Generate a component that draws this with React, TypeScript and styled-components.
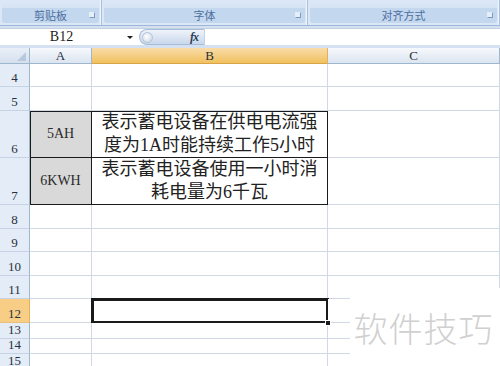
import React from 'react';
import styled, { createGlobalStyle } from 'styled-components';

const GlobalStyle = createGlobalStyle`
  html, body {
    margin: 0;
    padding: 0;
    background: #ffffff;
  }
  body {
    width: 500px;
    height: 366px;
    overflow: hidden;
  }
  * { box-sizing: border-box; }
`;

const GRID = '#d0d7e5';
const HEAD_LINE = '#9eb6ce';

const columns = [
    { key: 'A', width: 62 },
    { key: 'B', width: 236, active: true },
    { key: 'C', width: 0 },
];

const rows = [
    { n: 4, h: 23 },
    { n: 5, h: 24 },
    { n: 6, h: 47, cells: ['5AH', ['表示蓄电设备在供电电流强', '度为1A时能持续工作5小时']], top: true },
    { n: 7, h: 47, cells: ['6KWH', ['表示蓄电设备使用一小时消', '耗电量为6千瓦']] },
    { n: 8, h: 24 },
    { n: 9, h: 23 },
    { n: 10, h: 24 },
    { n: 11, h: 23 },
    { n: 12, h: 24, selected: true },
    { n: 13, h: 16 },
    { n: 14, h: 15 },
    { n: 15, h: 16 },
];

const App = () => {
    return (
        <Page>
            <GlobalStyle />
            <Ribbon>
                <Group $w={102}>
                    <GroupBody />
                    <GroupLabel>
                        剪贴板
                        <Launcher />
                    </GroupLabel>
                </Group>
                <Group $w={206}>
                    <GroupBody />
                    <GroupLabel>
                        字体
                        <Launcher />
                    </GroupLabel>
                </Group>
                <Group $w={0}>
                    <GroupBody />
                    <GroupLabel>
                        对齐方式
                        <Launcher />
                    </GroupLabel>
                </Group>
            </Ribbon>

            <FormulaBar>
                <NameBox>
                    <span>B12</span>
                    <DropArrow />
                </NameBox>
                <FxPill>
                    <Knob />
                    <Fx>fx</Fx>
                </FxPill>
                <FormulaInput />
            </FormulaBar>

            <Sheet>
                <HeaderRow>
                    <Corner>
                        <svg width="9" height="9" viewBox="0 0 9 9">
                            <polygon points="9,0 9,9 0,9" fill="#b7c9df" />
                        </svg>
                    </Corner>
                    {columns.map((c) => (
                        <ColHeader key={c.key} $w={c.width} $active={c.active}>
                            {c.key}
                        </ColHeader>
                    ))}
                </HeaderRow>

                {rows.map((r) => (
                    <Row key={r.n} $h={r.h}>
                        <RowHeader $active={r.selected}>{r.n}</RowHeader>
                        <Cell
                            $w={62}
                            $boxed={!!r.cells}
                            $fill={r.cells ? '#d9d9d9' : undefined}
                            $edgeTop={r.top}
                            $edgeLeft={!!r.cells}
                        >
                            {r.cells && <Label>{r.cells[0]}</Label>}
                        </Cell>
                        <Cell $w={236} $boxed={!!r.cells} $edgeTop={r.top} $selected={r.selected}>
                            {r.cells && (
                                <Text>
                                    {(r.cells[1] as string[]).map((line, i) => (
                                        <div key={i}>{line}</div>
                                    ))}
                                </Text>
                            )}
                            {r.selected && <FillHandle />}
                        </Cell>
                        <Cell $w={0} />
                    </Row>
                ))}
            </Sheet>

            <Watermark>软件技巧</Watermark>
        </Page>
    );
};

const Page = styled.div`
	position: relative;
	width: 500px;
	height: 366px;
	overflow: hidden;
	background: #d5e1f0;
	font-family: 'Noto Sans CJK SC', sans-serif;
`;

const Ribbon = styled.div`
	display: flex;
	height: 26px;
	background: #dbe7f5;
	border-bottom: 1px solid #9cb7da;
`;

const Group = styled.div<{ $w: number }>`
	display: flex;
	flex-direction: column;
	width: ${(p) => (p.$w ? `${p.$w}px` : 'auto')};
	flex: ${(p) => (p.$w ? '0 0 auto' : '1')};
	padding: 0 2px 2px;
	border-right: 1px solid #a9c1e0;
	box-shadow: inset -1px 0 0 #eef4fb;
`;

const GroupBody = styled.div`
	height: 8px;
	background: linear-gradient(#dce8f6, #d6e3f3);
`;

const GroupLabel = styled.div`
	position: relative;
	flex: 1;
	display: flex;
	align-items: center;
	justify-content: center;
	background: #c3d7ef;
	border-radius: 0 0 3px 3px;
	color: #4d6f9e;
	font-size: 11px;
	line-height: 1;
`;

const Launcher = styled.span`
	position: absolute;
	right: 4px;
	top: 4px;
	width: 6px;
	height: 6px;
	border: 1px solid #7d99c0;
	border-top-color: transparent;
	border-left-color: transparent;
	background: #e6eef8;
`;

const FormulaBar = styled.div`
	display: flex;
	height: 17px;
	margin-top: 2px;
	background: #ffffff;
	border-top: 1px solid #c2d0e2;
`;

const NameBox = styled.div`
	position: relative;
	display: flex;
	align-items: center;
	justify-content: center;
	width: 139px;
	padding-right: 16px;
	font-family: 'Liberation Serif', serif;
	font-size: 14px;
	color: #1c1c1c;
`;

const DropArrow = styled.span`
	position: absolute;
	right: 6px;
	top: 7px;
	border-left: 3px solid transparent;
	border-right: 3px solid transparent;
	border-top: 3px solid #1f1f1f;
`;

const FxPill = styled.div`
	position: relative;
	display: flex;
	align-items: center;
	justify-content: flex-end;
	width: 66px;
	padding-right: 6px;
	border-radius: 9px 0 0 9px;
	background: linear-gradient(#eef3fa, #c9d8ec);
	border: 1px solid #a7bcd8;
	border-right-color: #c4d2e5;
`;

const Knob = styled.span`
	position: absolute;
	left: 2px;
	top: 2px;
	width: 11px;
	height: 11px;
	border-radius: 50%;
	background: radial-gradient(circle at 40% 40%, #ffffff, #c7d3e2);
	border: 1px solid #b3c3d8;
`;

const Fx = styled.span`
	font-family: 'Liberation Serif', serif;
	font-style: italic;
	font-weight: bold;
	font-size: 12px;
	color: #2f3f55;
	letter-spacing: -1px;
`;

const FormulaInput = styled.div`
	flex: 1;
	background: #ffffff;
`;

const Sheet = styled.div`
	margin-top: 3px;
	background: #ffffff;
`;

const HeaderRow = styled.div`
	display: flex;
	height: 16px;
`;

const Corner = styled.div`
	display: flex;
	align-items: flex-end;
	justify-content: flex-end;
	width: 30px;
	padding: 0 3px 2px 0;
	background: linear-gradient(#e9eff7, #d5e0ee);
	border-right: 1px solid ${HEAD_LINE};
	border-bottom: 1px solid ${HEAD_LINE};
`;

const ColHeader = styled.div<{ $w: number; $active?: boolean }>`
	display: flex;
	align-items: center;
	justify-content: center;
	width: ${(p) => (p.$w ? `${p.$w}px` : 'auto')};
	flex: ${(p) => (p.$w ? '0 0 auto' : '1')};
	background: ${(p) =>
        p.$active ? 'linear-gradient(#f9dca8, #f1c15f)' : 'linear-gradient(#f6f9fc, #dbe4f0)'};
	border-right: 1px solid ${(p) => (p.$active ? '#e5b05a' : HEAD_LINE)};
	border-bottom: 1px solid ${(p) => (p.$active ? '#d9a447' : HEAD_LINE)};
	font-family: 'Liberation Serif', serif;
	font-size: 13px;
	color: #27303c;
`;

const Row = styled.div<{ $h: number }>`
	display: flex;
	height: ${(p) => p.$h}px;
`;

const RowHeader = styled.div<{ $active?: boolean }>`
	display: flex;
	align-items: flex-end;
	justify-content: center;
	width: 30px;
	padding-bottom: 1px;
	background: ${(p) => (p.$active ? '#f8cd85' : '#e4ecf7')};
	border-right: 1px solid ${(p) => (p.$active ? '#e5b05a' : HEAD_LINE)};
	border-bottom: 1px solid ${(p) => (p.$active ? '#e8c07c' : '#c5d3e4')};
	font-family: 'Liberation Serif', serif;
	font-size: 13px;
	line-height: 14px;
	color: #27313f;
`;

const Cell = styled.div<{
    $w: number;
    $boxed?: boolean;
    $fill?: string;
    $edgeTop?: boolean;
    $edgeLeft?: boolean;
    $selected?: boolean;
}>`
	position: relative;
	display: flex;
	align-items: center;
	justify-content: center;
	width: ${(p) => (p.$w ? `${p.$w}px` : 'auto')};
	flex: ${(p) => (p.$w ? '0 0 auto' : '1')};
	background: ${(p) => p.$fill || '#ffffff'};
	border-right: 1px solid ${(p) => (p.$boxed ? '#1a1a1a' : GRID)};
	border-bottom: 1px solid ${(p) => (p.$boxed ? '#1a1a1a' : GRID)};
	box-shadow: ${(p) =>
        [p.$edgeTop && 'inset 0 1px 0 #1a1a1a', p.$edgeLeft && 'inset 1px 0 0 #1a1a1a']
            .filter(Boolean)
            .join(', ') || 'none'};

	${(p) =>
        p.$selected &&
        `
		&::after {
			content: '';
			position: absolute;
			left: -1px;
			top: -1px;
			right: -2px;
			bottom: -2px;
			border: 3px solid #1a1a1a;
		}
	`}
`;

const FillHandle = styled.span`
	position: absolute;
	right: -4px;
	bottom: -4px;
	width: 6px;
	height: 6px;
	background: #1a1a1a;
	border: 1px solid #ffffff;
	z-index: 1;
`;

const Label = styled.span`
	font-family: 'Liberation Serif', 'Noto Sans CJK SC', serif;
	font-size: 14px;
	color: #2a2a2a;
`;

const Text = styled.div`
	text-align: center;
	font-family: 'Liberation Serif', 'Noto Sans CJK SC', serif;
	font-size: 18px;
	line-height: 23px;
	color: #222222;
	white-space: nowrap;
`;

const Watermark = styled.div`
	position: absolute;
	right: 0;
	bottom: 0;
	width: 150px;
	height: 78px;
	display: flex;
	align-items: center;
	justify-content: center;
	padding-right: 3px;
	background: #ffffff;
	color: #d0d0d0;
	font-family: 'Noto Sans CJK SC', sans-serif;
	font-weight: 300;
	font-size: 34px;
	letter-spacing: 1px;
`;

export default App;
